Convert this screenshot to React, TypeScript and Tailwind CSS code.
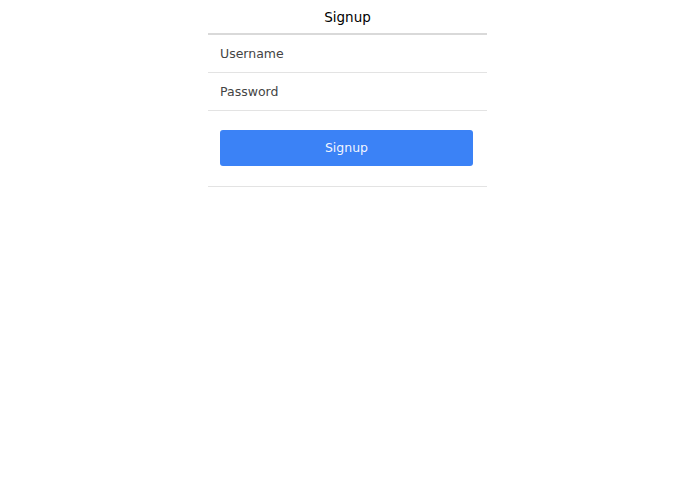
export default function App() {
  return (
    <div className="min-h-screen bg-white" style={{ fontFamily: '"DejaVu Sans", sans-serif' }}>
      <div className="mx-auto w-[279px]">
        <div className="h-[35px] pt-[2px] flex items-center justify-center border-b-2 border-[#d9d9d9] text-[13.5px] text-black">
          Signup
        </div>
        <input
          className="block w-full h-[38px] px-3 border-b border-[#e3e3e3] text-[12.5px] text-gray-700 placeholder:text-[#444] outline-none"
          placeholder="Username"
        />
        <input
          type="password"
          className="block w-full h-[38px] px-3 border-b border-[#e3e3e3] text-[12.5px] text-gray-700 placeholder:text-[#444] outline-none"
          placeholder="Password"
        />
        <div className="pl-3 pr-[14px] pt-[19px] pb-5 border-b border-[#e3e3e3]">
          <button className="w-full h-9 rounded-[3px] bg-[#3b82f6] text-[12.5px] text-white/95">
            Signup
          </button>
        </div>
      </div>
    </div>
  );
}
